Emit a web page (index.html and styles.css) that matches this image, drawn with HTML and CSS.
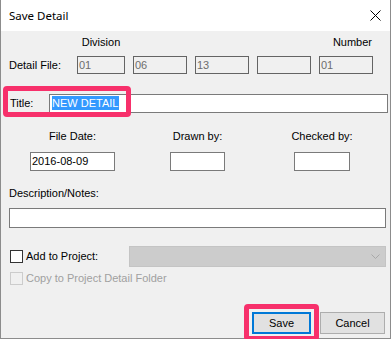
FILE: index.html
```html
<!DOCTYPE html>
<html>

<head>
    <meta charset="UTF-8">
    <meta name="viewport" content="width=device-width, initial-scale=1">
    <title>Save Detail</title>
    <link rel="stylesheet" href="styles.css">
</head>

<body>
    <div class="window">
        <div class="titlebar">
            <span class="caption">Save Detail</span>
            <svg class="close" width="11" height="11" viewBox="0 0 11 11">
                <path d="M0.5 0.5 L10.5 10.5 M10.5 0.5 L0.5 10.5" stroke="#000" stroke-width="1" fill="none" />
            </svg>
        </div>

        <div class="content">
            <div class="file-grid heads">
                <span></span>
                <span class="head-division">Division</span>
                <span></span>
                <span></span>
                <span></span>
                <span class="head-number">Number</span>
            </div>
            <div class="file-grid boxes">
                <span class="label">Detail File:</span>
                <div class="box disabled">01</div>
                <div class="box disabled">06</div>
                <div class="box disabled">13</div>
                <div class="box disabled"></div>
                <div class="box disabled">01</div>
            </div>

            <div class="title-row">
                <span class="label title-label">Title:</span>
                <div class="box title-input"><span class="selected">NEW DETAIL</span></div>
            </div>

            <div class="fields">
                <div class="field field-date">
                    <span class="label">File Date:</span>
                    <div class="box">2016-08-09</div>
                </div>
                <div class="field field-drawn">
                    <span class="label">Drawn by:</span>
                    <div class="box"></div>
                </div>
                <div class="field field-checked">
                    <span class="label">Checked by:</span>
                    <div class="box"></div>
                </div>
            </div>

            <div class="label desc-label">Description/Notes:</div>
            <div class="box desc-input"></div>

            <div class="project-row">
                <span class="check"></span>
                <span class="label">Add to Project:</span>
                <div class="combo">
                    <svg width="9" height="5" viewBox="0 0 9 5">
                        <path d="M0.5 0.5 L4.5 4.5 L8.5 0.5" stroke="#a8a8a8" stroke-width="1" fill="none" />
                    </svg>
                </div>
            </div>
            <div class="copy-row">
                <span class="check off"></span>
                <span class="label muted">Copy to Project Detail Folder</span>
            </div>

            <div class="buttons">
                <button class="btn default">Save</button>
                <button class="btn">Cancel</button>
            </div>
        </div>

        <!-- callout marks -->
        <div class="mark mark-title"></div>
        <div class="mark mark-save"></div>
    </div>
</body>

</html>
```

FILE: styles.css
```css
body {
    margin: 0;
    background-color: white;
    font-family: "Liberation Sans", Arial, sans-serif;
    font-size: 11px;
    color: black;
}

.window {
    position: relative;
    width: 391px;
    height: 339px;
    box-sizing: border-box;
    border: 1px solid #8c8c8c;
    border-top: none;
    background-color: #f0f0f0;
}

.titlebar {
    height: 31px;
    display: flex;
    align-items: center;
    justify-content: space-between;
    padding: 0 8px 0 8px;
    background-color: white;
}

.caption {
    font-family: "Noto Sans", "Open Sans", sans-serif;
    font-size: 11.5px;
    margin-top: -1px;
}

.close {
    display: block;
    margin-right: 1px;
}

.content {
    padding: 0 0 0 8px;
}

.label {
    line-height: 13px;
    white-space: nowrap;
}

.box {
    box-sizing: border-box;
    height: 19px;
    border: 1px solid #7a7a7a;
    background-color: white;
    line-height: 16px;
    padding-left: 1px;
    white-space: nowrap;
    overflow: hidden;
}

.box.disabled {
    height: 18px;
    border-color: #646464;
    background-color: #f0f0f0;
    color: #6d6d6d;
}

/* Division / Number grid */
.file-grid {
    display: grid;
    grid-template-columns: 60px 48px 54px 54px 54px 54px;
    column-gap: 8px;
    align-items: center;
}

.heads {
    margin-top: 5px;
    height: 13px;
    line-height: 13px;
}

.head-division {
    justify-self: center;
}

.head-number {
    justify-self: end;
    margin-right: 1px;
}

.boxes {
    margin-top: 7px;
}

/* Title */
.title-row {
    display: flex;
    align-items: center;
    margin-top: 20px;
}

.title-label {
    width: 39px;
    padding-left: 1px;
}

.title-input {
    width: 339px;
    padding-left: 2px;
}

.selected {
    background-color: #3399ff;
    color: white;
    padding: 1px 1px 1px 0;
}

/* Date / Drawn / Checked */
.fields {
    display: flex;
    margin-top: 17px;
}

.field {
    display: flex;
    flex-direction: column;
    align-items: center;
    gap: 9px;
}

.field .box {
    width: 100%;
}

.field-date {
    width: 85px;
    margin-left: 21px;
}

.field-drawn {
    width: 55px;
    margin-left: 55px;
}

.field-checked {
    width: 56px;
    margin-left: 69px;
}

.desc-label {
    margin-top: 16px;
}

.desc-input {
    width: 377px;
    height: 20px;
    margin-top: 8px;
}

/* Project */
.project-row {
    display: flex;
    align-items: center;
    margin-top: 18px;
    height: 21px;
}

.check {
    box-sizing: border-box;
    width: 13px;
    height: 13px;
    border: 1px solid #333333;
    background-color: white;
    margin-left: 1px;
    margin-right: 3px;
}

.check.off {
    border-color: #cccccc;
    background-color: #f0f0f0;
}

.combo {
    box-sizing: border-box;
    width: 257px;
    height: 21px;
    margin-left: 31px;
    background-color: #cccccc;
    border: 1px solid #c4c4c4;
    display: flex;
    align-items: center;
    justify-content: flex-end;
    padding-right: 5px;
}

.combo svg {
    display: block;
}

.copy-row {
    display: flex;
    align-items: center;
    margin-top: 5px;
    height: 13px;
}

.muted {
    color: #a0a0a0;
}

/* Buttons */
.buttons {
    display: flex;
    justify-content: flex-end;
    gap: 9px;
    margin-top: 27px;
    padding-right: 5px;
}

.btn {
    box-sizing: border-box;
    height: 22px;
    width: 65px;
    font-family: "Liberation Sans", Arial, sans-serif;
    font-size: 11px;
    color: black;
    background-color: #e1e1e1;
    border: 1px solid #adadad;
    padding: 0;
}

.btn.default {
    width: 59px;
    border: 2px solid #0078d7;
}

/* Pink callouts drawn over the dialog */
.mark {
    position: absolute;
    box-sizing: border-box;
    border: 5px solid #f7306b;
    border-radius: 4px;
}

.mark-title {
    left: 2px;
    top: 86px;
    width: 128px;
    height: 31px;
}

.mark-save {
    left: 243px;
    top: 304px;
    width: 75px;
    height: 37px;
}
```
